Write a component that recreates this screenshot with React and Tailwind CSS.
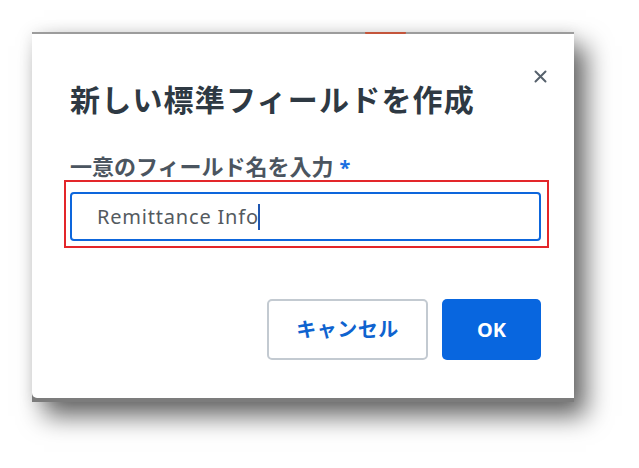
import React from "react";

const font = { fontFamily: "'Noto Sans', 'Noto Sans CJK JP', sans-serif" };

export default function App() {
  return (
    <div className="w-[639px] h-[468px] bg-white overflow-hidden" style={font}>
      <div className="ml-[32px] mt-[32px] w-[542px] relative shadow-[12px_14px_24px_rgba(0,0,0,0.6),0_0_14px_rgba(0,0,0,0.08)] bg-[#7c7c7c] pb-[4px]">
        {/* top strip of underlying UI */}
        <div className="h-[2px] bg-[#9c9c9c]" />
        <div className="absolute left-[333px] top-0 w-[41px] h-[5px] rounded-b-full bg-[#c4553b]" />
        <div className="bg-white rounded-bl-[5px] h-[364px] relative px-[38px] pt-[48px]">
          <button className="absolute right-[27px] top-[35px] w-[14px] h-[14px] flex items-center justify-center">
            <svg width="13" height="13" viewBox="0 0 13 13">
              <path d="M1.5 1.5 L11.5 11.5 M11.5 1.5 L1.5 11.5" stroke="#56616c" strokeWidth="2" strokeLinecap="round" />
            </svg>
          </button>
          <h1 className="text-[30px] leading-[36px] font-semibold text-[#2e3943] tracking-[1.2px]">
            新しい標準フィールドを作成
          </h1>
          <div className="mt-[35px] text-[22px] leading-[26px] font-bold text-[#4b5560]">
            一意のフィールド名を入力<span className="text-[#1b6fe0] ml-[6px] text-[20px]">*</span>
          </div>
          <div className="relative mt-[11px] mr-[-5px]">
            <div className="absolute left-[-6px] right-[-8px] top-[-12px] bottom-[-7px] border-2 border-[#e3262a] pointer-events-none" />
            <div className="h-[49px] border-2 border-[#0d66dc] rounded-[4px] flex items-center pl-[25px]">
              <span className="text-[20px] text-[#545a60] tracking-[0.8px]">Remittance Info</span>
              <span className="w-[2px] h-[26px] bg-[#1f56b0] ml-[-1px]" />
            </div>
          </div>
          <div className="flex justify-end gap-[14px] mt-[58px] mr-[-5px]">
            <button className="w-[161px] h-[61px] border-2 border-[#c3cad1] rounded-[5px] bg-white text-[20px] font-bold text-[#0f63cf] tracking-[0.5px] flex items-center justify-center">
              キャンセル
            </button>
            <button className="w-[99px] h-[61px] rounded-[5px] bg-[#0866df] text-[20px] font-bold text-white flex items-center justify-center">
              OK
            </button>
          </div>
        </div>
      </div>
    </div>
  );
}
